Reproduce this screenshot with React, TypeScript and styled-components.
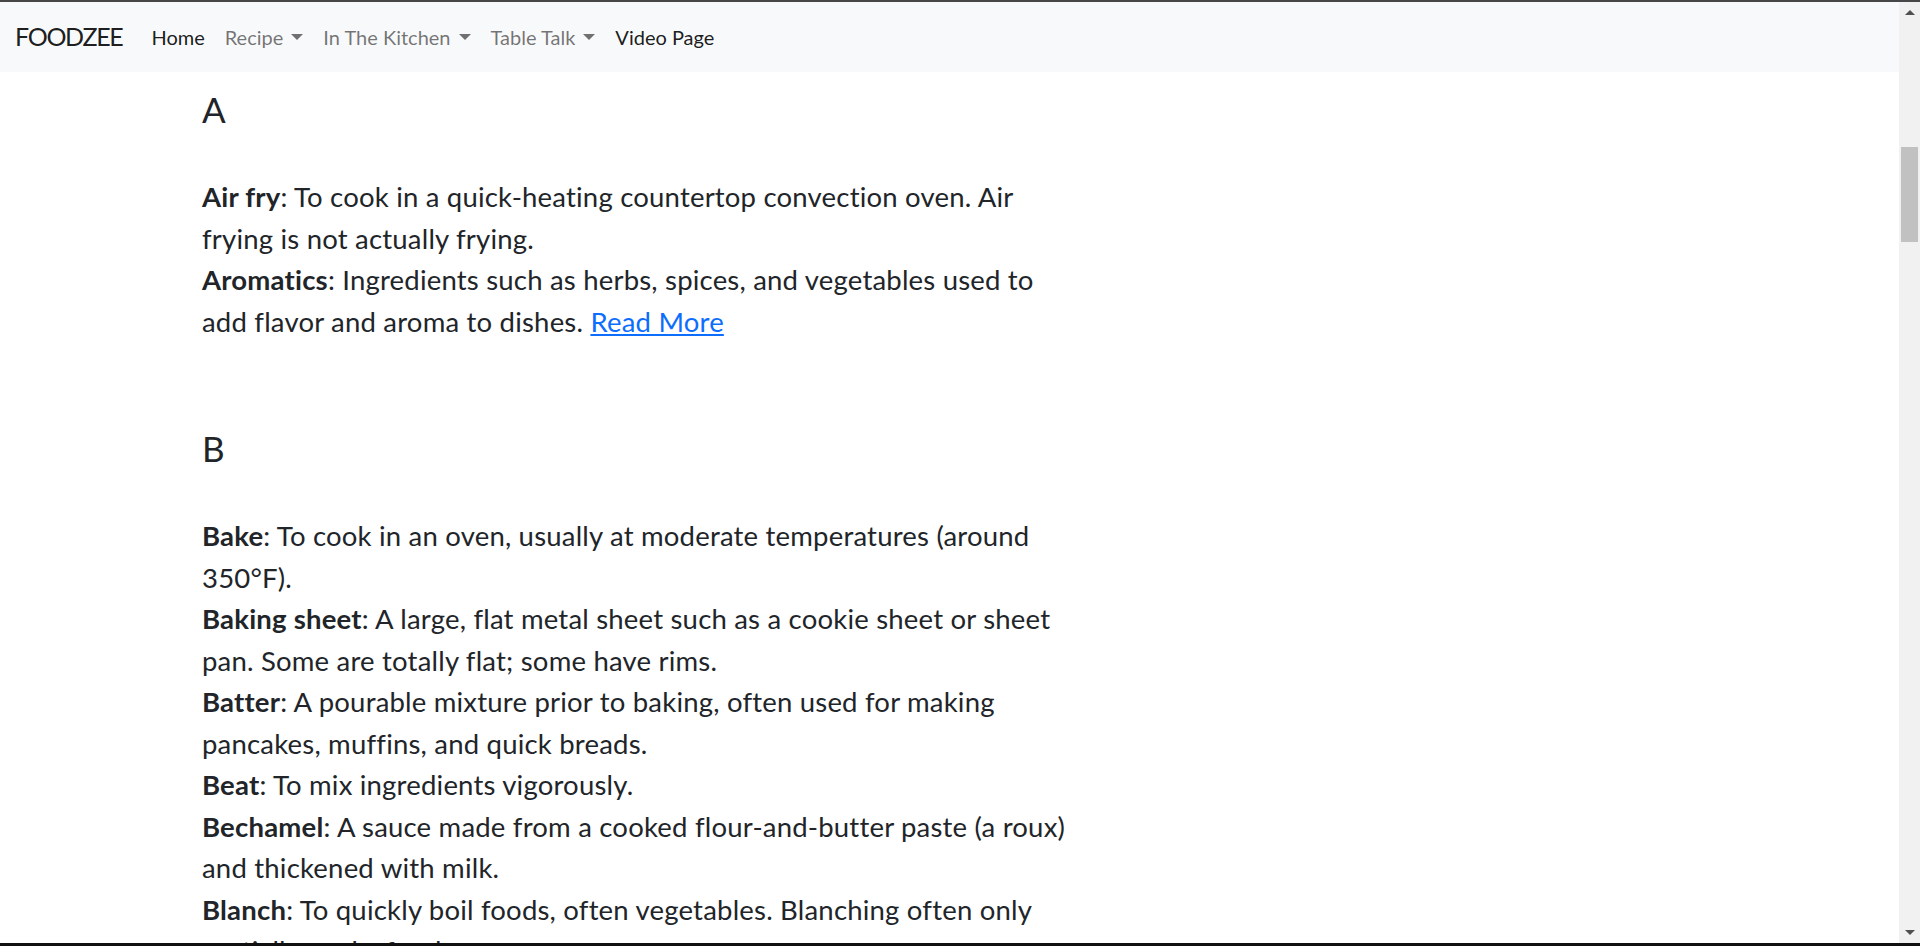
import React from 'react';
import styled, {createGlobalStyle} from 'styled-components';

const GlobalStyle = createGlobalStyle`
  html, body {
    margin: 0;
    padding: 0;
    overflow: hidden;
    background: #ffffff;
  }
  body {
    font-family: Lato, "Open Sans", "Liberation Sans", sans-serif;
    color: #212529;
  }
`;

const Frame = styled.div`
  display: flex;
  flex-direction: column;
  width: 1920px;
  height: 946px;
  overflow: hidden;
`;

const Edge = styled.div<{ $h: number; $c: string }>`
  flex: 0 0 ${p => p.$h}px;
  background: ${p => p.$c};
`;

const Window = styled.div`
  flex: 1;
  display: flex;
  min-height: 0;
`;

const Viewport = styled.div`
  flex: 1;
  display: flex;
  flex-direction: column;
  overflow: hidden;
`;

const Navbar = styled.nav`
  flex: 0 0 70px;
  display: flex;
  align-items: center;
  padding: 0 15px;
  background: #f8f9fa;
`;

const Brand = styled.a`
  font-size: 25px;
  line-height: 1.5;
  letter-spacing: -1.3px;
  color: rgba(0, 0, 0, 0.9);
  margin-right: 19px;
  text-decoration: none;
`;

const NavList = styled.ul`
  display: flex;
  list-style: none;
  margin: 0;
  padding: 0;
`;

const NavLink = styled.a<{ $active?: boolean; $dropdown?: boolean }>`
  display: block;
  padding: 10px 10px;
  font-size: 20px;
  line-height: 30px;
  text-decoration: none;
  color: ${p => (p.$active ? 'rgba(0, 0, 0, 0.9)' : 'rgba(0, 0, 0, 0.55)')};

  ${p => p.$dropdown && `
    &::after {
      content: '';
      display: inline-block;
      margin-left: 8px;
      vertical-align: 5px;
      border-top: 6px solid;
      border-right: 6px solid transparent;
      border-left: 6px solid transparent;
      border-bottom: 0;
    }
  `}
`;

const Main = styled.main`
  padding: 16px 0 0 202px;
`;

const Section = styled.section`
  width: 878px;
  margin-bottom: 85px;
`;

const Letter = styled.h3`
  margin: 0 0 46px;
  font-size: 35px;
  line-height: 42px;
  font-weight: 400;
`;

const Glossary = styled.p`
  margin: 0;
  font-size: 27.5px;
  line-height: 41.5px;
  letter-spacing: 0.2px;
`;

const Term = styled.b`
  font-weight: 700;
`;

const ReadMore = styled.a`
  color: #0d6efd;
  text-decoration: underline;
`;

const Scrollbar = styled.div`
  flex: 0 0 21px;
  display: flex;
  flex-direction: column;
  align-items: center;
  background: #f1f1f1;
`;

const Arrow = styled.div<{ $down?: boolean }>`
  flex: 0 0 21px;
  display: flex;
  align-items: center;
  justify-content: center;

  &::before {
    content: '';
    border-left: 5px solid transparent;
    border-right: 5px solid transparent;
    ${p => (p.$down ? 'border-top: 5px solid #505050;' : 'border-bottom: 5px solid #505050;')}
  }
`;

const Track = styled.div`
  flex: 1;
  align-self: stretch;
  display: flex;
  flex-direction: column;
  align-items: center;
`;

const Thumb = styled.div`
  width: 17px;
  height: 95px;
  margin-top: 124px;
  background: #c1c1c1;
`;

type Entry = { term: string; text: string };

const sections: { letter: string; entries: Entry[]; more?: boolean }[] = [
  {
    letter: 'A',
    more: true,
    entries: [
      {term: 'Air fry', text: 'To cook in a quick-heating countertop convection oven. Air frying is not actually frying.'},
      {term: 'Aromatics', text: 'Ingredients such as herbs, spices, and vegetables used to add flavor and aroma to dishes.'},
    ],
  },
  {
    letter: 'B',
    entries: [
      {term: 'Bake', text: 'To cook in an oven, usually at moderate temperatures (around 350°F).'},
      {term: 'Baking sheet', text: 'A large, flat metal sheet such as a cookie sheet or sheet pan. Some are totally flat; some have rims.'},
      {term: 'Batter', text: 'A pourable mixture prior to baking, often used for making pancakes, muffins, and quick breads.'},
      {term: 'Beat', text: 'To mix ingredients vigorously.'},
      {term: 'Bechamel', text: 'A sauce made from a cooked flour-and-butter paste (a roux) and thickened with milk.'},
      {term: 'Blanch', text: 'To quickly boil foods, often vegetables. Blanching often only partially cooks foods.'},
      {term: 'Boil', text: 'To heat a liquid until bubbles break the surface.'},
      {term: 'Braise', text: 'To brown food in fat, then cook it slowly in a covered pot with a small amount of liquid.'},
    ],
  },
];

const App = () => {
  return (
    <>
      <GlobalStyle />
      <Frame>
        <Edge $h={2} $c="#474747" />
        <Window>
          <Viewport>
            <Navbar>
              <Brand href="#">FOODZEE</Brand>
              <NavList>
                <li><NavLink href="#" $active>Home</NavLink></li>
                <li><NavLink href="#" $dropdown>Recipe</NavLink></li>
                <li><NavLink href="#" $dropdown>In The Kitchen</NavLink></li>
                <li><NavLink href="#" $dropdown>Table Talk</NavLink></li>
                <li><NavLink href="#" $active>Video Page</NavLink></li>
              </NavList>
            </Navbar>
            <Main>
              {sections.map(section => (
                <Section key={section.letter}>
                  <Letter>{section.letter}</Letter>
                  <Glossary>
                    {section.entries.map((entry, i) => (
                      <React.Fragment key={entry.term}>
                        {i > 0 && <br />}
                        <Term>{entry.term}</Term>: {entry.text}
                      </React.Fragment>
                    ))}
                    {section.more && <> <ReadMore href="#">Read More</ReadMore></>}
                  </Glossary>
                </Section>
              ))}
            </Main>
          </Viewport>
          <Scrollbar>
            <Arrow />
            <Track>
              <Thumb />
            </Track>
            <Arrow $down />
          </Scrollbar>
        </Window>
        <Edge $h={3} $c="#111111" />
      </Frame>
    </>
  );
};

export default App;
